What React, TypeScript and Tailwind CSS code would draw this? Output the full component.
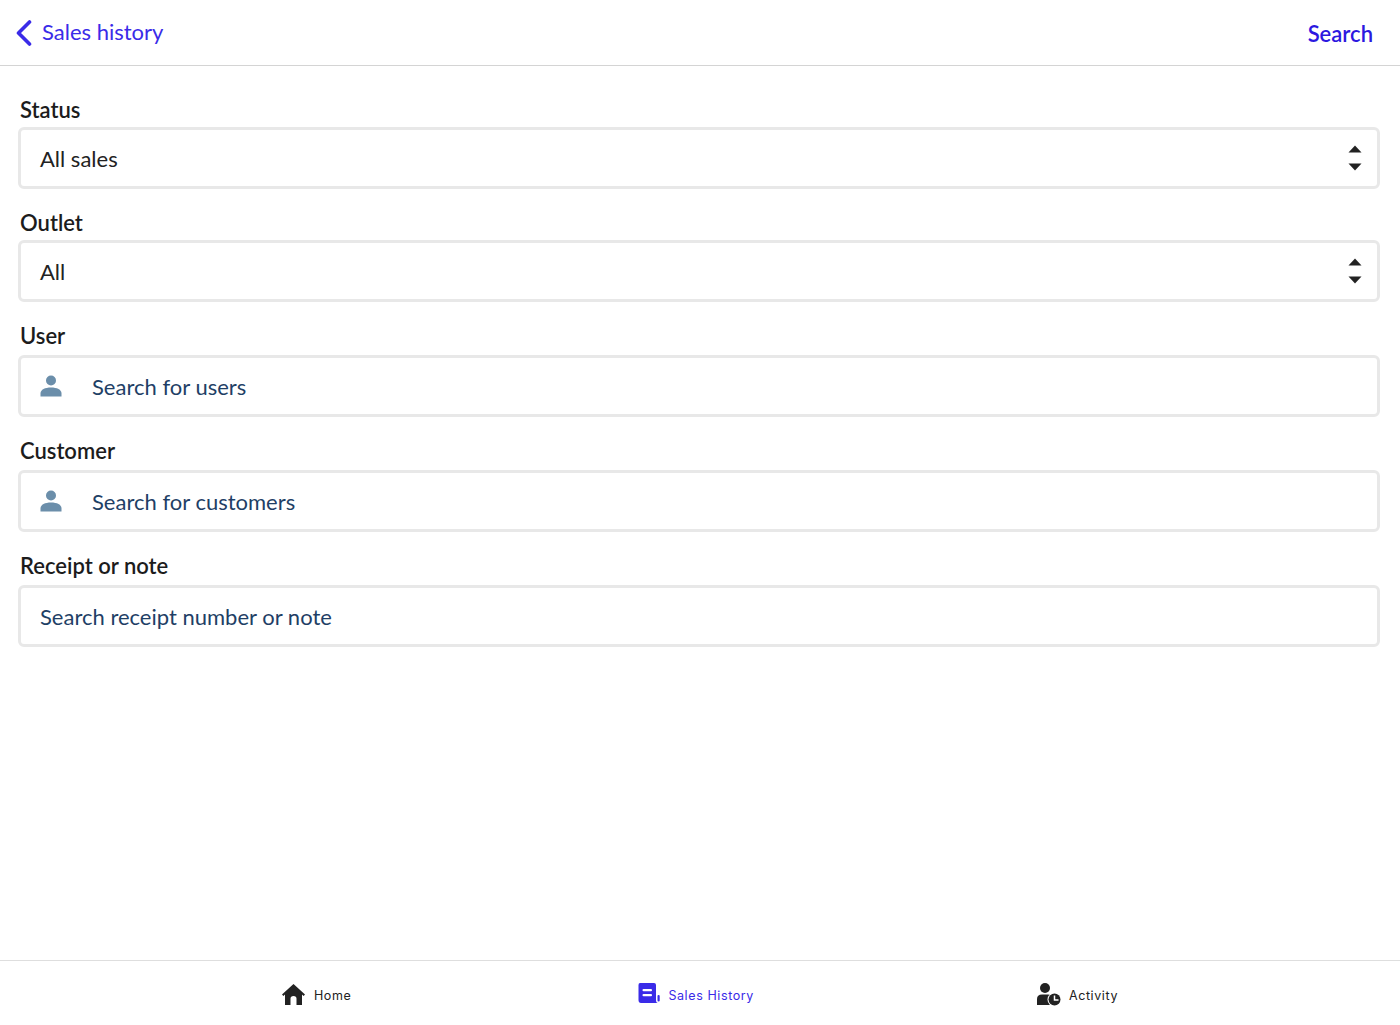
import type { ReactNode } from "react";

const fieldBox =
  "flex h-[62px] items-center rounded-[6px] border-[3px] border-[#e8e8e8] bg-white pl-[19px] pr-[15px] text-[22px]";

function SortArrows() {
  return (
    <svg width="14" height="26" viewBox="0 0 14 26" className="ml-auto">
      <path d="M7 0.5 13.5 7.5H0.5Z" fill="#222222" />
      <path d="M0.5 18.5H13.5L7 25.5Z" fill="#222222" />
    </svg>
  );
}

function PersonIcon() {
  return (
    <svg width="22" height="22" viewBox="0 0 22 22" className="mr-[30px] -mt-[1px] shrink-0">
      <circle cx="11" cy="5.5" r="5" fill="#6b8eaa" />
      <path d="M0.5 21.5V18.5C0.5 14.5 5 12.5 11 12.5S21.5 14.5 21.5 18.5V21.5Z" fill="#6b8eaa" />
    </svg>
  );
}

function Field({
  label,
  className,
  children,
}: {
  label: string;
  className: string;
  children: ReactNode;
}) {
  return (
    <div className={className}>
      <div className="pl-[2px] text-[22px] font-semibold leading-[29px] text-[#1c1c1c]">{label}</div>
      {children}
    </div>
  );
}

function SelectBox({ value }: { value: string }) {
  return (
    <div className={`${fieldBox} mt-[3px] text-[#222222]`}>
      <span className="mt-[1px]">{value}</span>
      <SortArrows />
    </div>
  );
}

function SearchBox({ placeholder, icon }: { placeholder: string; icon?: boolean }) {
  return (
    <div className={`${fieldBox} mt-[5px] text-[#1f3f66]`}>
      {icon ? <PersonIcon /> : null}
      <span className="mt-[1px]">{placeholder}</span>
    </div>
  );
}

export default function App() {
  return (
    <div className="flex h-[1025px] flex-col overflow-hidden bg-white font-['Lato',sans-serif]">
      <header className="flex h-[66px] shrink-0 items-center border-b border-[#d4d4d4] pl-[16px] pr-[27px]">
        <svg width="16" height="26" viewBox="0 0 16 26" fill="none" className="mr-[10px]">
          <path d="M13.5 2 2.5 13 13.5 24" stroke="#3a2be8" strokeWidth="3.6" strokeLinecap="round" strokeLinejoin="round" />
        </svg>
        <span className="-mt-[2px] text-[22px] text-[#3a2be8]">Sales history</span>
        <span className="ml-auto pt-[2px] text-[22px] font-semibold text-[#2c18e0]">Search</span>
      </header>

      <main className="flex-1 pl-[18px] pr-[20px] pt-[29px]">
        <Field label="Status" className="">
          <SelectBox value="All sales" />
        </Field>
        <Field label="Outlet" className="mt-[19px]">
          <SelectBox value="All" />
        </Field>
        <Field label="User" className="mt-[19px]">
          <SearchBox placeholder="Search for users" icon />
        </Field>
        <Field label="Customer" className="mt-[19px]">
          <SearchBox placeholder="Search for customers" icon />
        </Field>
        <Field label="Receipt or note" className="mt-[19px]">
          <SearchBox placeholder="Search receipt number or note" />
        </Field>
      </main>

      <footer className="flex h-[65px] shrink-0 items-center justify-center border-t border-[#dedede] pt-[4px] font-['Inter',sans-serif] text-[12.5px] tracking-[0.6px]">
        <div className="flex items-center gap-[9px] text-[#222222]">
          <svg width="23" height="21" viewBox="0 0 23 21" className="-mt-[2px]">
            <path d="M11.5 0 23 10.5 21.6 12 20 10.6V21H14.5V14.5Q14.5 12 11.5 12T8.5 14.5V21H3V10.6L1.4 12 0 10.5Z" fill="#222222" />
          </svg>
          <span className="pt-[2px]">Home</span>
        </div>
        <div className="ml-[287px] flex items-center gap-[8px] text-[#3a2be8]">
          <svg width="22" height="21" viewBox="0 0 22 21" className="-mt-[4px]">
            <path d="M2 0H16Q18 0 18 2V17Q18 20 20 20H3Q0.5 20 0.5 17V2Q0.5 0 2 0Z" fill="#3a2be8" />
            <rect x="4.5" y="6" width="9.5" height="2.2" rx="1" fill="#ffffff" />
            <rect x="4.5" y="11" width="9.5" height="2.2" rx="1" fill="#ffffff" />
            <rect x="19.5" y="12" width="2.2" height="6.5" rx="1" fill="#3a2be8" />
          </svg>
          <span className="pt-[2px]">Sales History</span>
        </div>
        <div className="ml-[283px] flex items-center gap-[8px] text-[#222222]">
          <svg width="24" height="23" viewBox="0 0 24 23" className="-mt-[2px]">
            <circle cx="8" cy="5" r="5" fill="#222222" />
            <path d="M0 22V16Q0 11.5 5 11.5H11Q15 11.5 16 14V22Z" fill="#222222" />
            <circle cx="17.5" cy="16.5" r="7" fill="#ffffff" />
            <circle cx="17.5" cy="16.5" r="6" fill="#222222" />
            <path d="M17.5 12.5V17H21.5" stroke="#ffffff" strokeWidth="1.5" fill="none" />
          </svg>
          <span className="pt-[2px]">Activity</span>
        </div>
      </footer>
    </div>
  );
}
